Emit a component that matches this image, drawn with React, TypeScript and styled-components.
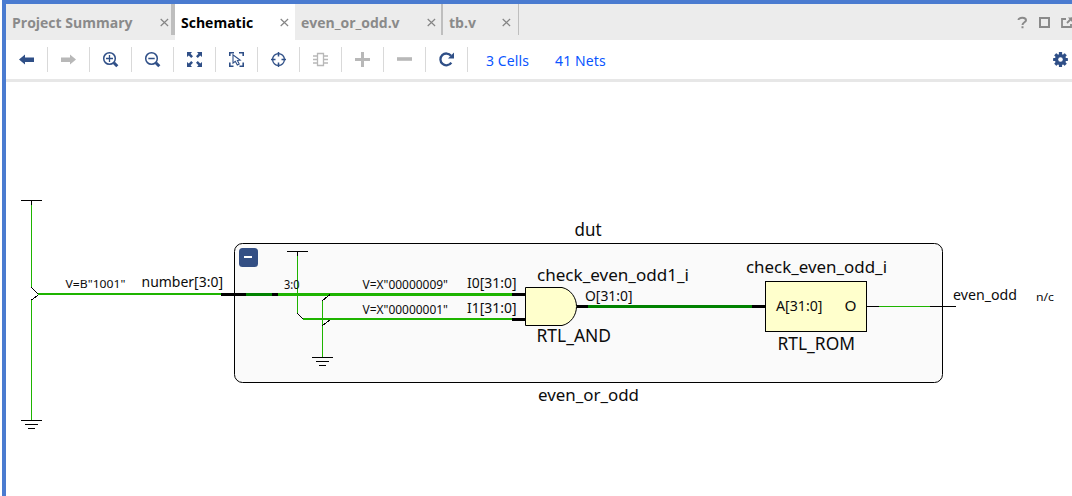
import React from "react";
import styled, { createGlobalStyle } from "styled-components";

const NAVY = "#2f4f87";
const MUTED = "#b8b8b8";
const NET = "#1eb400";
const BUS = "#008200";

const GlobalStyle = createGlobalStyle`
  * { box-sizing: border-box; }
  body { margin: 0; background: #fff; font-family: "Noto Sans", "Open Sans", sans-serif; overflow: hidden; }
`;

const Window = styled.main`
  display: flex;
  flex-direction: column;
  height: 496px;
  margin-left: 2px;
  border-left: 4px solid #4a7bd0;
  border-top: 4px solid #4a7bd0;
  background: #fff;
`;

const TabBar = styled.nav`
  display: flex;
  flex: none;
  height: 36px;
  background: #ececec;
`;

const Tab = styled.div<{ $width: number; $end?: number; $active?: boolean }>`
  display: flex;
  align-items: center;
  justify-content: space-between;
  width: ${(p) => p.$width}px;
  padding: 0 ${(p) => p.$end ?? 6}px 0 6px;
  background: ${(p) => (p.$active ? "#fff" : "transparent")};
  color: ${(p) => (p.$active ? "#000" : "#8a8a8a")};
`;

const TabLabel = styled.span`
  font: 700 14px/20px "Open Sans", "Noto Sans", sans-serif;
  white-space: nowrap;
  padding-top: 2px;
`;

const TabDivider = styled.div<{ $width: number }>`
  width: ${(p) => p.$width}px;
  height: 31px;
  background: #bebebe;
`;

const WindowControls = styled.div`
  display: flex;
  align-items: center;
  margin-left: auto;
  height: 36px;
`;

const Toolbar = styled.div`
  display: flex;
  flex: none;
  align-items: center;
  height: 42px;
  border-bottom: 3px solid #e7e7e7;
`;

const ToolButton = styled.div`
  display: flex;
  align-items: center;
  justify-content: center;
  width: 42px;
  height: 25px;
  border-right: 1px solid #d9d9d9;
`;

const Stat = styled.a<{ $left: number }>`
  margin-left: ${(p) => p.$left}px;
  padding-top: 2px;
  color: #0a55ff;
  font-size: 14px;
  line-height: 20px;
  letter-spacing: 0.1px;
  white-space: nowrap;
`;

const SettingsButton = styled.div`
  display: flex;
  margin-left: auto;
  margin-right: 4px;
`;

const Canvas = styled.svg`
  display: block;
  flex: none;
  font-family: "Noto Sans", "Open Sans", sans-serif;
`;

const Close = () => (
  <svg width="9" height="9" viewBox="0 0 9 9" stroke="#858585" strokeWidth="1.2" fill="none">
    <path d="M0.7 1l7.4 7M8.1 1L0.7 8" />
  </svg>
);

const Icon = ({ children, color = NAVY }: { children: React.ReactNode; color?: string }) => (
  <svg width="17" height="17" viewBox="0 0 17 17" fill="none" stroke={color} color={color}>
    {children}
  </svg>
);

const ARROW = "M1 8.5L7 3.5V6.5H16V11H7V13.5Z";

const tools: React.ReactNode[] = [
  <Icon><path d={ARROW} fill={NAVY} stroke="none" /></Icon>,
  <Icon color={MUTED}><path d={ARROW} fill={MUTED} stroke="none" transform="matrix(-1 0 0 1 17 0)" /></Icon>,
  <Icon>
    <circle cx="7.5" cy="7.5" r="5.8" strokeWidth="1.5" />
    <path d="M4 7.5H11M7.5 4V11" strokeWidth="1.3" />
    <path d="M11.8 11.8L15.3 15.3" strokeWidth="3" />
  </Icon>,
  <Icon>
    <circle cx="7.5" cy="7.5" r="5.8" strokeWidth="1.5" />
    <path d="M4.3 7.5H10.7" strokeWidth="1.5" />
    <path d="M11.8 11.8L15.3 15.3" strokeWidth="3" />
  </Icon>,
  <Icon>
    <path
      d="M1 1H6L4.6 2.8L7 5.2L5.2 7L2.8 4.6L1 6ZM16 1V6L14.2 4.6L11.8 7L10 5.2L12.4 2.8L11 1ZM1 16V11L2.8 12.4L5.2 10L7 11.8L4.6 14.2L6 16ZM16 16H11L12.4 14.2L10 11.8L11.8 10L14.2 12.4L16 11Z"
      fill={NAVY}
      stroke="none"
    />
  </Icon>,
  <Icon>
    <path d="M1.8 5V1.8H6M11 1.8H15.2V5M1.8 11.5V15.2H5.5M11.5 15.2H15.2V11.5" strokeWidth="1.6" />
    <path d="M5 3.8V12.2L7.3 10.3L9.3 14L11.2 13L9.4 9.5L12.2 9.2Z" strokeWidth="1.1" />
  </Icon>,
  <Icon>
    <circle cx="8.5" cy="8.5" r="5.9" strokeWidth="1.3" />
    <path d="M8.5 1V5.5M8.5 11.5V16M1 8.5H5.5M11.5 8.5H16" strokeWidth="1.5" />
  </Icon>,
  <Icon color={MUTED}>
    <path d="M5.5 2.5H11.5V14.5H5.5Z" strokeWidth="1.3" />
    <path d="M1 5H5M1 8.5H5M1 12H5M12 5H16M12 8.5H16M12 12H16" strokeWidth="1.3" />
  </Icon>,
  <Icon color={MUTED}><path d="M1 8.5H16M8.5 1V16" strokeWidth="3" /></Icon>,
  <Icon color={MUTED}><path d="M1 8H16" strokeWidth="3.6" /></Icon>,
  <Icon>
    <path d="M13.3 11.6A5.9 5.9 0 1 1 13 4.8" strokeWidth="2.3" />
    <path d="M16 1.5V7.5H10Z" fill={NAVY} stroke="none" />
  </Icon>,
];

const GEAR_TEETH = [0, 45, 90, 135];

const Gear = () => (
  <svg width="15" height="15" viewBox="-7.5 -7.5 15 15">
    {GEAR_TEETH.map((a) => (
      <rect key={a} x="-1.6" y="-7.4" width="3.2" height="14.8" rx="0.5" fill={NAVY} transform={`rotate(${a})`} />
    ))}
    <circle r="5.6" fill={NAVY} />
    <circle r="2.3" fill="#fff" />
  </svg>
);

type LabelProps = { x: number; y: number; w: number; size: number; children: string };

const Label = ({ x, y, w, size, children }: LabelProps) => (
  <text x={x} y={y} fontSize={size} textLength={w} lengthAdjust="spacingAndGlyphs" fill="#0c0c0c">
    {children}
  </text>
);

type WireProps = { x: number; y: number; w: number; h: number; color?: string };

const Wire = ({ x, y, w, h, color = "#000" }: WireProps) => (
  <rect x={x} y={y} width={w} height={h} fill={color} shapeRendering="crispEdges" />
);

const Power = ({ x, y }: { x: number; y: number }) => (
  <>
    <Wire x={x - 10} y={y} w={21} h={1} />
    <Wire x={x} y={y} w={1} h={5} />
  </>
);

const Ground = ({ x, y }: { x: number; y: number }) => (
  <>
    <Wire x={x - 10} y={y} w={21} h={1} />
    <Wire x={x - 6} y={y + 4} w={13} h={1} />
    <Wire x={x - 3} y={y + 8} w={7} h={1} />
  </>
);

const Schematic = () => (
  <Canvas width="1066" height="414" viewBox="6 82 1066 414">
    <rect x="234.5" y="243.5" width="708" height="139" rx="8" fill="#fafafa" stroke="#000" />

    <Wire x={31} y={205} w={1} h={82} color={NET} />
    <Wire x={31} y={300} w={1} h={120} color={NET} />
    <Power x={31} y={200} />
    <Ground x={31} y={420} />
    <path d="M31.5 287.5L38 293.8M38 295L31.5 300" stroke="#000" fill="none" shapeRendering="crispEdges" />
    <Wire x={38} y={293} w={183} h={2} color={NET} />
    <Wire x={221} y={293} w={25} h={3} />
    <Wire x={246} y={293} w={26} h={3} color={BUS} />
    <Wire x={272} y={293} w={6} h={3} />
    <Label x={65.5} y={288} w={60} size={11.5}>{'V=B"1001"'}</Label>
    <Label x={141.5} y={287} w={81.5} size={14.5}>number[3:0]</Label>

    <rect x="239" y="248" width="19" height="19" rx="3.5" fill="#334f84" />
    <Wire x={244} y={256} w={8} h={2} color="#fff" />

    <Wire x={297} y={256} w={1} h={57} color={NET} />
    <Power x={297} y={251} />
    <Wire x={278} y={293} w={234} h={3} color={NET} />
    <Wire x={303} y={318} w={209} h={2} color={NET} />
    <Wire x={322} y={300} w={1} h={57} color={NET} />
    <Ground x={322} y={357} />
    <path
      d="M297.5 313.5L303 319M322.5 300.5L330 294.5M322.5 325.5L330 320"
      stroke="#000"
      fill="none"
      shapeRendering="crispEdges"
    />
    <Wire x={512} y={293} w={13} h={3} />
    <Wire x={512} y={318} w={13} h={3} />
    <Label x={284} y={289} w={15.5} size={12}>3:0</Label>
    <Label x={362.5} y={289} w={85.5} size={12}>{'V=X"00000009"'}</Label>
    <Label x={362.5} y={314} w={85.5} size={12}>{'V=X"00000001"'}</Label>
    <Label x={467} y={288} w={49.5} size={14.5}>I0[31:0]</Label>
    <Label x={467} y={313} w={49.5} size={14.5}>I1[31:0]</Label>

    <path
      d="M525.5 287.5H562C571 289.5 576.5 298 576.5 306.5S571 323.5 562 325.5H525.5Z"
      fill="#ffffcc"
      stroke="#000"
    />
    <Wire x={577} y={305} w={11} h={3} />
    <Wire x={588} y={305} w={164} h={3} color={BUS} />
    <Wire x={752} y={305} w={13} h={3} />
    <Label x={537} y={281} w={152} size={17}>check_even_odd1_i</Label>
    <Label x={585} y={301} w={47.5} size={14.5}>O[31:0]</Label>
    <Label x={536.5} y={342} w={74.5} size={17.5}>RTL_AND</Label>

    <rect x="765.5" y="281.5" width="101" height="50" fill="#ffffcc" stroke="#000" />
    <Label x={746} y={273} w={141} size={17}>check_even_odd_i</Label>
    <Label x={776} y={311} w={46.5} size={14.5}>A[31:0]</Label>
    <Label x={844.5} y={311} w={12} size={14.5}>O</Label>
    <Label x={777.5} y={350} w={77.5} size={17.5}>RTL_ROM</Label>

    <Wire x={867} y={306} w={12} h={1} />
    <Wire x={879} y={306} w={51} h={1} color={NET} />
    <Wire x={930} y={306} w={26} h={1} />

    <Label x={574.5} y={236} w={27} size={17.5}>dut</Label>
    <Label x={538} y={401} w={101} size={17}>even_or_odd</Label>
    <Label x={953} y={300} w={64} size={14.5}>even_odd</Label>
    <Label x={1036} y={301} w={18} size={11.5}>n/c</Label>
  </Canvas>
);

export default function App() {
  return (
    <>
      <GlobalStyle />
      <Window>
        <TabBar>
          <Tab $width={165} $end={2}><TabLabel>Project Summary</TabLabel><Close /></Tab>
          <TabDivider $width={4} />
          <Tab $width={120} $active><TabLabel>Schematic</TabLabel><Close /></Tab>
          <Tab $width={146} $end={5}><TabLabel>even_or_odd.v</TabLabel><Close /></Tab>
          <TabDivider $width={2} />
          <Tab $width={75} $end={7}><TabLabel>tb.v</TabLabel><Close /></Tab>
          <TabDivider $width={1} />
          <WindowControls>
            <svg width="56" height="16" viewBox="1016 16 56 16" fill="none" stroke="#8a8a8a" strokeWidth="2">
              <path d="M1018.5 22C1018.5 19 1026 19 1026 22.3C1026 24.3 1022.5 24.3 1022.5 27M1022.5 28.3V30.3" />
              <path d="M1040 20H1049V29H1040Z" />
              <path d="M1066 21H1062V29H1071V26M1067 25L1072 20" strokeWidth="1.8" />
              <path d="M1068 19.5H1072V24Z" fill="#8a8a8a" stroke="none" />
            </svg>
          </WindowControls>
        </TabBar>
        <Toolbar>
          {tools.map((tool, i) => <ToolButton key={i}>{tool}</ToolButton>)}
          <Stat $left={18}>3 Cells</Stat>
          <Stat $left={26}>41 Nets</Stat>
          <SettingsButton><Gear /></SettingsButton>
        </Toolbar>
        <Schematic />
      </Window>
    </>
  );
}
